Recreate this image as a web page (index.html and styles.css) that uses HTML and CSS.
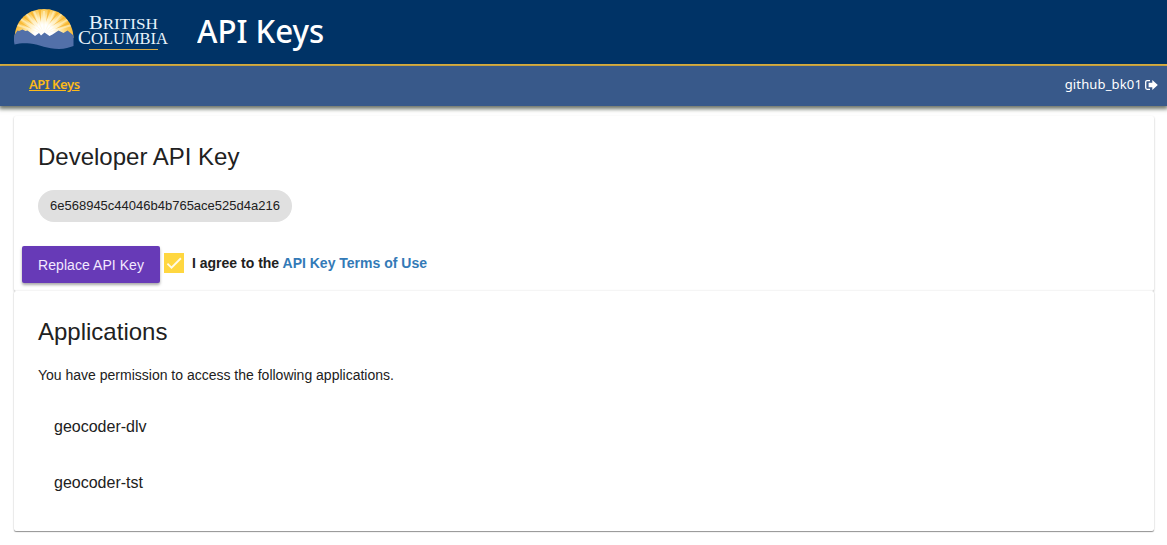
FILE: index.html
```html
<!DOCTYPE html>
<html lang="en">
<head>
<meta charset="utf-8">
<title>API Keys</title>
<link rel="stylesheet" href="styles.css">
</head>
<body>
<header class="banner">
  <svg class="logo" width="160" height="48" viewBox="10 5 160 48" role="img" aria-label="British Columbia">
    <defs>
      <radialGradient id="sun" gradientUnits="userSpaceOnUse" cx="44" cy="34" r="31">
        <stop offset="0.3" stop-color="#ffffff"/>
        <stop offset="0.5" stop-color="#fff0c4"/>
        <stop offset="0.75" stop-color="#fccf62"/>
        <stop offset="1" stop-color="#f9b52a"/>
      </radialGradient>
      <clipPath id="dome"><path d="M14.500 38C15 20 28 9 44 9s29 11 29.500 29z"/></clipPath>
    </defs>
    <g clip-path="url(#dome)">
      <rect x="14" y="8" width="61" height="32" fill="url(#sun)"/>
      <g fill="#fff3cd" opacity=".6">
        <path d="M44 34L18 24l-1 2zM44 34L21 18l-1 2zM44 34L27 13l-2 1zM44 34L35 11l-2 1zM44 34L43 11h2zM44 34L53 11l2 1zM44 34L61 13l2 1zM44 34L68 18l1 2zM44 34L71 24l1 2z"/>
      </g>
      <g fill="#f7b22a" opacity=".75">
        <path d="M32 29L15 21l1-2zM35 26L20 15l2-2zM38 24L28 10l3-1zM41 22L38 9h3zM46 22L48 9h3zM49 24L58 10l3 1zM52 26L67 14l2 2zM55 29L72 20l1 3z"/>
      </g>
    </g>
    <path d="M14.500 35L17.500 30.500 19 31 22.500 29.500 25.500 31 27.500 30.500 35 36 39 33 41 35.500 44.500 32.500 49.500 36 52.500 34.500 58.500 30.500 63.500 33 67.500 30.500 73.500 35.500V46C69.500 47.500 65 49 59 49 47 49 40 44.500 30 43.500 23 43 19 43.500 14.500 44.500 13.800 41 13.800 38 14.500 35z" fill="#5270a9"/>
    <g class="wordmark">
      <text x="89" y="29" textLength="69" lengthAdjust="spacingAndGlyphs"><tspan font-size="18.5">B</tspan><tspan font-size="15.5">RITISH</tspan></text>
      <text x="78" y="44.300" textLength="90" lengthAdjust="spacingAndGlyphs"><tspan font-size="19.5">C</tspan><tspan font-size="16.500">OLUMBIA</tspan></text>
    </g>
    <path d="M89 49.500h69" stroke="#d9ac45" stroke-width="1"/>
  </svg>
  <h1 class="title"><span class="title-text">API Keys</span></h1>
</header>
<nav class="navbar">
  <a class="nav-link" href="#">API Keys</a>
  <a class="user" href="#"><span class="user-name">github_bk01</span>
    <svg width="13" height="10" viewBox="0 0 13 10" aria-hidden="true">
      <path d="M5 .7H2.200Q.7.700.7 2.200v5.600q0 1.500 1.500 1.500H5" fill="none" stroke="#fff" stroke-width="1.300"/>
      <path d="M7.300 0L12.800 5 7.300 10V7.200H3.600V2.800h3.700z" fill="#fff"/>
    </svg>
  </a>
</nav>
<main class="content">
  <section class="card key-card">
    <h2 class="heading">Developer API Key</h2>
    <div class="chip">6e568945c44046b4b765ace525d4a216</div>
    <div class="actions">
      <button class="replace" type="button">Replace API Key</button>
      <span class="check" role="checkbox" aria-checked="true" aria-label="I agree">
        <svg width="20" height="20" viewBox="0 0 24 24"><path d="M4.100 12.700L9 17.600 20.300 6.300" fill="none" stroke="#fffbe9" stroke-width="2.200"/></svg>
      </span>
      <span class="agree">I agree to the <a class="terms" href="#">API Key Terms of Use</a></span>
    </div>
  </section>
  <section class="card apps-card">
    <h2 class="heading">Applications</h2>
    <p class="note">You have permission to access the following applications.</p>
    <ul class="apps">
      <li class="app">geocoder-dlv</li>
      <li class="app">geocoder-tst</li>
    </ul>
  </section>
</main>
</body>
</html>
```

FILE: styles.css
```css
* { box-sizing: border-box; }
body {
  min-height: 545px;
  margin: 0;
  background: #fff;
  color: #212121;
  font-family: "Liberation Sans", Arial, sans-serif;
}
.banner {
  display: flex;
  height: 66px;
  padding: 5px 10px 0;
  background: #003366;
  border-bottom: 2px solid #e3b541;
}
.logo { flex: none; }
.wordmark {
  fill: #e9f4fb;
  font-family: "Liberation Serif", "Times New Roman", serif;
}
.title {
  margin: 0 0 0 27px;
  color: #fff;
  font: 500 33px/52px "Noto Sans", sans-serif;
}
.title-text {
  display: inline-block;
  transform: scaleX(.945);
  transform-origin: left;
}
.navbar {
  display: flex;
  justify-content: space-between;
  height: 40px;
  padding: 0 9px 0 29px;
  background: #38598a;
  box-shadow: 0 2px 4px 1px rgba(60, 70, 55, .75);
  font: 13px/37px "Noto Sans", sans-serif;
}
.nav-link {
  color: #fcba19;
  font-weight: 600;
  letter-spacing: -.45px;
}
.user {
  display: flex;
  align-items: center;
  gap: 3px;
  height: 37px;
  color: #fff;
  text-decoration: none;
}
.user-name { letter-spacing: .15px; }
.content { padding: 10px 13px 0 14px; }
.card {
  padding: 25px 24px 0;
  background: #fff;
  border-radius: 2px;
  box-shadow: 0 1px 1px rgba(0, 0, 0, .4), 0 1px 2px rgba(0, 0, 0, .2);
}
.key-card {
  height: 175px;
  box-shadow: 0 1px 2px rgba(0, 0, 0, .3);
}
.apps-card {
  height: 240px;
  box-shadow: 0 1px 1px rgba(0, 0, 0, .4), 0 0 2px rgba(0, 0, 0, .15);
}
.heading {
  margin: 0;
  font-size: 24px;
  font-weight: 400;
  line-height: 32px;
}
.chip {
  width: 254px;
  height: 32px;
  margin-top: 17px;
  padding-left: 12px;
  background: #e0e0e0;
  border-radius: 16px;
  font-size: 13px;
  line-height: 32px;
  white-space: nowrap;
}
.actions {
  display: flex;
  margin: 24px 0 0 -16px;
}
.replace {
  width: 138px;
  height: 37px;
  padding: 0;
  border: 0;
  border-radius: 2px;
  background: #673ab7;
  box-shadow: 0 2px 3px rgba(0, 0, 0, .35);
  color: #f3e9ff;
  font: 14px "Liberation Sans", Arial, sans-serif;
  letter-spacing: .06px;
  white-space: nowrap;
}
.check {
  width: 20px;
  height: 20px;
  margin: 7px 8px 0 4px;
  background: #ffd740;
}
.check svg { display: block; }
.agree {
  font-size: 14px;
  font-weight: 700;
  line-height: 34px;
  white-space: nowrap;
}
.terms { color: #337ab7; text-decoration: none; }
.note {
  margin: 17px 0 0;
  font-size: 14px;
  line-height: 20px;
}
.apps {
  margin: 14px 0 0;
  padding: 0 0 0 16px;
  list-style: none;
}
.app {
  font-size: 16px;
  line-height: 56px;
}
```
